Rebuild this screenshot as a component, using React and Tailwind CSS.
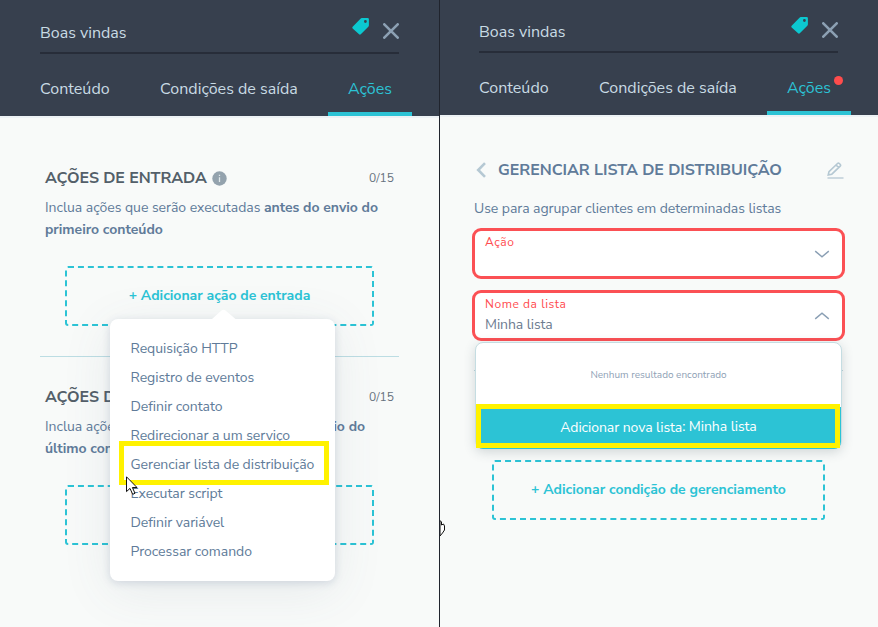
import React from "react";

function TagIcon() {
  return (
    <svg width="17" height="17" viewBox="0 0 18 18" className="block">
      <path
        fillRule="evenodd"
        fill="#0cc8d0"
        d="M10.4 0.1H16.6Q17.9 0.1 17.9 1.4V7.8Q17.9 8.6 17.3 9.2L9.3 17.3Q8.4 18.1 7.5 17.3L0.7 11Q-0.1 10.2 0.7 9.3L9 0.8Q9.6 0.1 10.4 0.1ZM14.2 2.2A1.5 1.5 0 1 0 14.2 5.2A1.5 1.5 0 1 0 14.2 2.2Z"
      />
    </svg>
  );
}

function CloseIcon() {
  return (
    <svg width="16" height="16" viewBox="0 0 16 16" className="block">
      <path d="M1.3 1.3L14.7 14.7M14.7 1.3L1.3 14.7" stroke="#8ca0b3" strokeWidth="2.6" strokeLinecap="round" />
    </svg>
  );
}

function Chevron({ up }) {
  return (
    <svg width="16" height="8" viewBox="0 0 16 8" fill="none" className="block">
      <path d={up ? "M1.2 6.9L8 1.2L14.8 6.9" : "M1.2 1.1L8 6.8L14.8 1.1"} stroke="#8a9fb4" strokeWidth="1.4" />
    </svg>
  );
}

function Header({ alert }) {
  return (
    <header className={"bg-[#37404e] px-10 text-[16px] text-[#c9dbe4] " + (alert ? "h-[115px] pt-[14px] pl-[39px]" : "h-[116px] pt-[15px]")}>
      <div className="flex h-[39px] w-[359px] justify-between border-b-2 border-[#272d39]">
        <span className="mt-[6px] leading-6">Boas vindas</span>
        <div className="flex gap-[14px]">
          <div className="mt-[3px]"><TagIcon /></div>
          <div className="mt-[8px]"><CloseIcon /></div>
        </div>
      </div>
      <nav className="flex h-[62px] w-[372px]">
        <span className="mt-[23px] w-[120px] leading-6 tracking-[0.03px]">Conteúdo</span>
        <span className="mt-[23px] w-[168px] leading-6 tracking-[0.03px]">Condições de saída</span>
        <div className="relative flex w-[84px] justify-center border-b-4 border-[#2cc3d5] pt-[23px] leading-6 text-[#2cc3d5]">
          <span>Ações</span>
          {alert && <i className="absolute top-[23px] left-[67px] size-[9px] rounded-full bg-[#ff4c4c]" />}
        </div>
      </nav>
    </header>
  );
}

function DashedButton({ children, className = "" }) {
  return (
    <button className={"flex h-[60px] items-center justify-center rounded-[3px] border-2 border-dashed border-[#2cc3d5] text-[14px] font-bold text-[#2cc3d5] " + className}>
      {children}
    </button>
  );
}

function Section({ title, when, target, button }) {
  return (
    <section className="px-[5px] text-[14px] leading-[22px] text-[#607b99]">
      <div className="flex h-6 items-center justify-between">
        <h2 className="flex items-center gap-[5px] text-[16px] font-bold tracking-[-0.05px] text-[#535f69]">
          <span>{title}</span>
          <svg width="15" height="15" viewBox="0 0 15 15">
            <circle cx="7.5" cy="7.5" r="7.2" fill="#93a2ad" />
            <path d="M7.5 6.3V11M7.5 3.7V5" stroke="#dfe7ea" strokeWidth="1.3" />
          </svg>
        </h2>
        <span className="text-[12px] text-[#67727e]">0/15</span>
      </div>
      <p className="mt-[7px] h-11 tracking-[-0.03px] whitespace-nowrap">
        <span>Inclua ações que serão executadas </span>
        <b>{when}</b>
        <br />
        <b>{target}</b>
      </p>
      <DashedButton className="mt-[25px] ml-5 w-[309px]">{button}</DashedButton>
    </section>
  );
}

const menu = [
  "Requisição HTTP",
  "Registro de eventos",
  "Definir contato",
  "Redirecionar a um serviço",
  "Gerenciar lista de distribuição",
  "Executar script",
  "Definir variável",
  "Processar comando",
];

function ActionMenu() {
  return (
    <div className="absolute top-[319px] left-[110px] h-[262px] w-[225px] rounded-[8px] bg-white pt-[15px] pl-[20.5px] text-[14px] leading-[29px] tracking-[-0.04px] text-[#607b99] shadow-[0_2px_8px_rgba(80,100,140,0.2),0_10px_50px_rgba(80,100,120,0.1)]">
      <svg width="24" height="10" viewBox="0 0 24 10" className="absolute -top-[10px] left-[102px]">
        <path d="M0 10L9.5 1.5Q11.5 0 13.5 1.5L23.5 10Z" fill="#fff" />
      </svg>
      <ul>
        {menu.map((item) => (
          <li key={item} className="whitespace-nowrap">{item}</li>
        ))}
      </ul>
      <div className="absolute top-[122px] left-[9px] h-11 w-[210px] border-[5px] border-[#fff200]" />
      <svg width="13" height="20" viewBox="0 0 13 20" className="absolute top-[157px] left-[16px]">
        <path d="M.5 .8V15.6L4 12.4L6.7 18.3L9 17.3L6.4 11.5H11Z" fill="#fff" stroke="#111" strokeWidth="1" />
      </svg>
    </div>
  );
}

function Field({ label, value, up }) {
  return (
    <div className="flex h-[51px] items-center justify-between rounded-[9px] border-[3px] border-[#fb5054] bg-white pr-[12px] pl-[10px]">
      <div className="h-[45px] pt-[2px]">
        <div className="text-[12px] leading-[18px] tracking-[0.55px] text-[#ff4c50]">{label}</div>
        <div className="pt-px text-[14px] leading-[22px] tracking-[-0.08px] text-[#6d7c90]">{value}</div>
      </div>
      <Chevron up={up} />
    </div>
  );
}

function EmptyResults() {
  return (
    <div className="absolute top-[342px] left-[35px] h-[107px] w-[367px] rounded-[8px] border border-[#c5dde2] bg-white shadow-[0_3px_12px_rgba(50,70,80,0.2)]">
      <div className="flex h-[64px] items-center justify-center text-[10px] text-[#8fa2b6]">
        <span>Nenhum resultado encontrado</span>
      </div>
      <div className="flex h-[42px] items-center justify-center rounded-b-[7px] bg-[#2cc3d5] text-[14px] tracking-[-0.06px] text-white">
        <span className="pb-px">Adicionar nova lista</span>
        <span className="pb-[3px] whitespace-pre">: Minha lista</span>
      </div>
      <div className="absolute top-[61px] left-0 h-11 w-[364px] border-[5px] border-[#fff200]" />
    </div>
  );
}

export default function App() {
  return (
    <div className="flex h-[627px] w-[878px] overflow-hidden bg-[#f8faf9] font-['Nunito_Sans','Nunito','Lato',sans-serif]">
      <main className="relative w-[439px]">
        <Header />
        <div className="h-[2px] bg-[#edf2f5]" />
        <div className="w-[399px] pt-[48px] pl-10">
          <Section title="AÇÕES DE ENTRADA" when="antes do envio do" target="primeiro conteúdo" button="+ Adicionar ação de entrada" />
          <hr className="mt-[30px] mb-[28px] border-[#bcdde3]" />
          <Section title="AÇÕES DE SAÍDA" when="após o envio do" target="último conteúdo" button="+ Adicionar ação de saída" />
        </div>
        <ActionMenu />
      </main>
      <div className="w-px bg-[#20242d]" />
      <main className="relative w-[438px]">
        <Header alert />
        <div className="h-[2px] bg-[#edf2f5]" />
        <div className="w-[405px] pt-[41px] pl-8">
          <div className="flex h-6 items-center pl-[4px] text-[#607b99]">
            <svg width="10" height="16" viewBox="0 0 10 16" fill="none">
              <path d="M9 1.2L2.2 8L9 14.8" stroke="#b5c8d3" strokeWidth="2.6" />
            </svg>
            <h2 className="ml-[12px] text-[16px] font-bold tracking-[-0.03px] whitespace-nowrap">GERENCIAR LISTA DE DISTRIBUIÇÃO</h2>
            <svg width="17" height="17" viewBox="0 0 17 17" fill="none" stroke="#b5c8d3" className="mr-px ml-auto">
              <path d="M1.2 12.9L2 9.6L10.5 1.5Q11.4 .7 12.3 1.5L13.3 2.5Q14 3.3 13.2 4.2L4.8 12.2ZM9 3L11.8 5.7" strokeWidth="1.6" />
              <path d="M.5 16H16.5" strokeWidth="1.3" />
            </svg>
          </div>
          <p className="mt-[16px] ml-[2px] text-[14px] leading-[22px] tracking-[-0.05px] whitespace-nowrap text-[#607b99]">Use para agrupar clientes em determinadas listas</p>
          <div className="mt-[8px] flex flex-col gap-[11px]">
            <Field label="Ação" value="" />
            <Field label="Nome da lista" value="Minha lista" up />
          </div>
          <hr className="mt-[29px] ml-[2px] w-[369px] border-[#bcd5dc]" />
          <DashedButton className="mt-[89px] ml-[20px] w-[333px] pb-[2px]">+ Adicionar condição de gerenciamento</DashedButton>
        </div>
        <EmptyResults />
        <svg width="5" height="18" viewBox="0 0 5 18" className="absolute top-[519px] left-0">
          <path d="M0 1.5L1.5 3V6L3.5 5L4.5 7V11L2.5 14L0 17Z" fill="#fff" stroke="#111" strokeWidth="1" />
        </svg>
      </main>
    </div>
  );
}
